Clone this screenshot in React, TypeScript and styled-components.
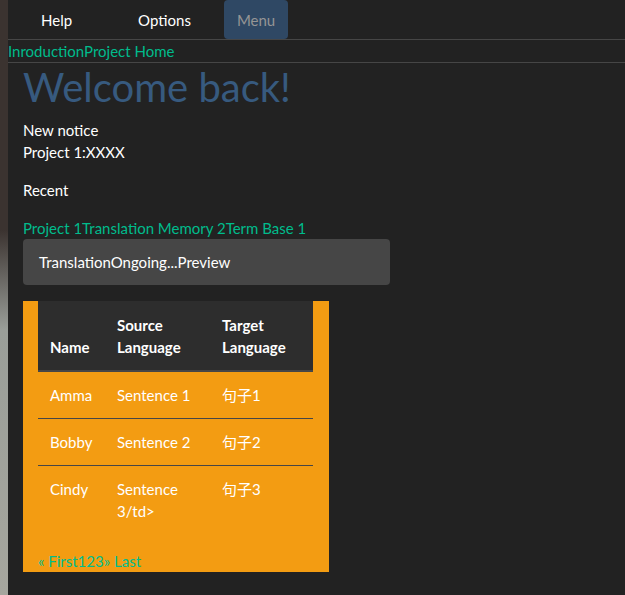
import React from "react";
import styled, { createGlobalStyle } from "styled-components";

const GlobalStyle = createGlobalStyle`
  html, body { margin: 0; padding: 0; }
  body {
    padding-left: 8px;
    min-height: 595px;
    background: linear-gradient(to bottom, #3b3330 0px, #3b3330 230px, #9a9e99 330px, #a6a69e 595px);
    font-family: Lato, "Noto Sans", sans-serif;
    font-size: 15px;
    color: #fff;
  }
`;

const Page = styled.div`
  background: #222;
  min-height: 595px;
`;

const NavBar = styled.nav`
  display: flex;
  height: 39px;
  border-bottom: 1px solid #464646;
`;

const NavItem = styled.a<{ $active?: boolean }>`
  display: flex;
  align-items: center;
  height: 38px;
  padding: 0 ${(p) => (p.$active ? "13px" : "33px")};
  color: ${(p) => (p.$active ? "#959595" : "#fff")};
  background: ${(p) => (p.$active ? "#2f4864" : "transparent")};
  border-radius: 4px;
  line-height: 21px;
  padding-top: 1px;
`;

const Crumbs = styled.div`
  height: 22px;
  line-height: 22px;
  color: #00bc8c;
  border-bottom: 1px solid #464646;
`;

const Content = styled.div`
  padding: 0 15px;
`;

const Title = styled.h1`
  margin: 2px 0 10px;
  font-size: 40px;
  font-weight: 400;
  line-height: 44px;
  color: #375a7f;
`;

const Para = styled.p<{ $mb?: number }>`
  margin: 0 0 ${(p) => p.$mb ?? 16}px;
  line-height: 22px;
`;

const LinkRow = styled.div`
  color: #00bc8c;
  line-height: 22px;
`;

const Well = styled.div`
  width: 367px;
  box-sizing: border-box;
  background: #464646;
  border-radius: 4px;
  padding: 12px 16px;
  line-height: 22px;
`;

const TablePanel = styled.div`
  margin-top: 16px;
  width: 306px;
  box-sizing: border-box;
  background: #f39c12;
  padding: 0 16px 1px 15px;
`;

const Table = styled.table`
  width: 100%;
  border-collapse: collapse;
  table-layout: fixed;
`;

const Th = styled.th<{ $w: number }>`
  box-sizing: border-box;
  width: ${(p) => p.$w}px;
  background: #2d2d2d;
  text-align: left;
  vertical-align: bottom;
  font-weight: 700;
  padding: 13px 12px 12px;
  line-height: 22px;
  border-bottom: 2px solid #464646;
`;

const Tr = styled.tr`
  & + & td { border-top: 1px solid #464646; }
`;

const Td = styled.td`
  padding: 12px 12px;
  line-height: 22px;
  vertical-align: top;
  font-family: Lato, "Noto Sans CJK SC", sans-serif;
`;

const Pager = styled.div`
  margin-top: 17px;
  color: #00bc8c;
  line-height: 20px;
`;

const rows = [
  ["Amma", "Sentence 1", "句子1"],
  ["Bobby", "Sentence 2", "句子2"],
  ["Cindy", "Sentence 3/td>", "句子3"],
];

export default function App() {
  return (
    <Page>
      <GlobalStyle />
      <NavBar>
        <NavItem>Help</NavItem>
        <NavItem>Options</NavItem>
        <NavItem $active>Menu</NavItem>
      </NavBar>
      <Crumbs>InroductionProject Home</Crumbs>
      <Content>
        <Title>Welcome back!</Title>
        <Para>
          New notice
          <br />
          Project 1:XXXX
        </Para>
        <Para>Recent</Para>
        <LinkRow>Project 1Translation Memory 2Term Base 1</LinkRow>
        <Well>TranslationOngoing...Preview</Well>
        <TablePanel>
          <Table>
            <thead>
              <tr>
                <Th $w={67}>Name</Th>
                <Th $w={105}>Source Language</Th>
                <Th $w={103}>Target Language</Th>
              </tr>
            </thead>
            <tbody>
              {rows.map((r) => (
                <Tr key={r[0]}>
                  {r.map((c) => (
                    <Td key={c}>{c}</Td>
                  ))}
                </Tr>
              ))}
            </tbody>
          </Table>
          <Pager>« First123» Last</Pager>
        </TablePanel>
      </Content>
    </Page>
  );
}
